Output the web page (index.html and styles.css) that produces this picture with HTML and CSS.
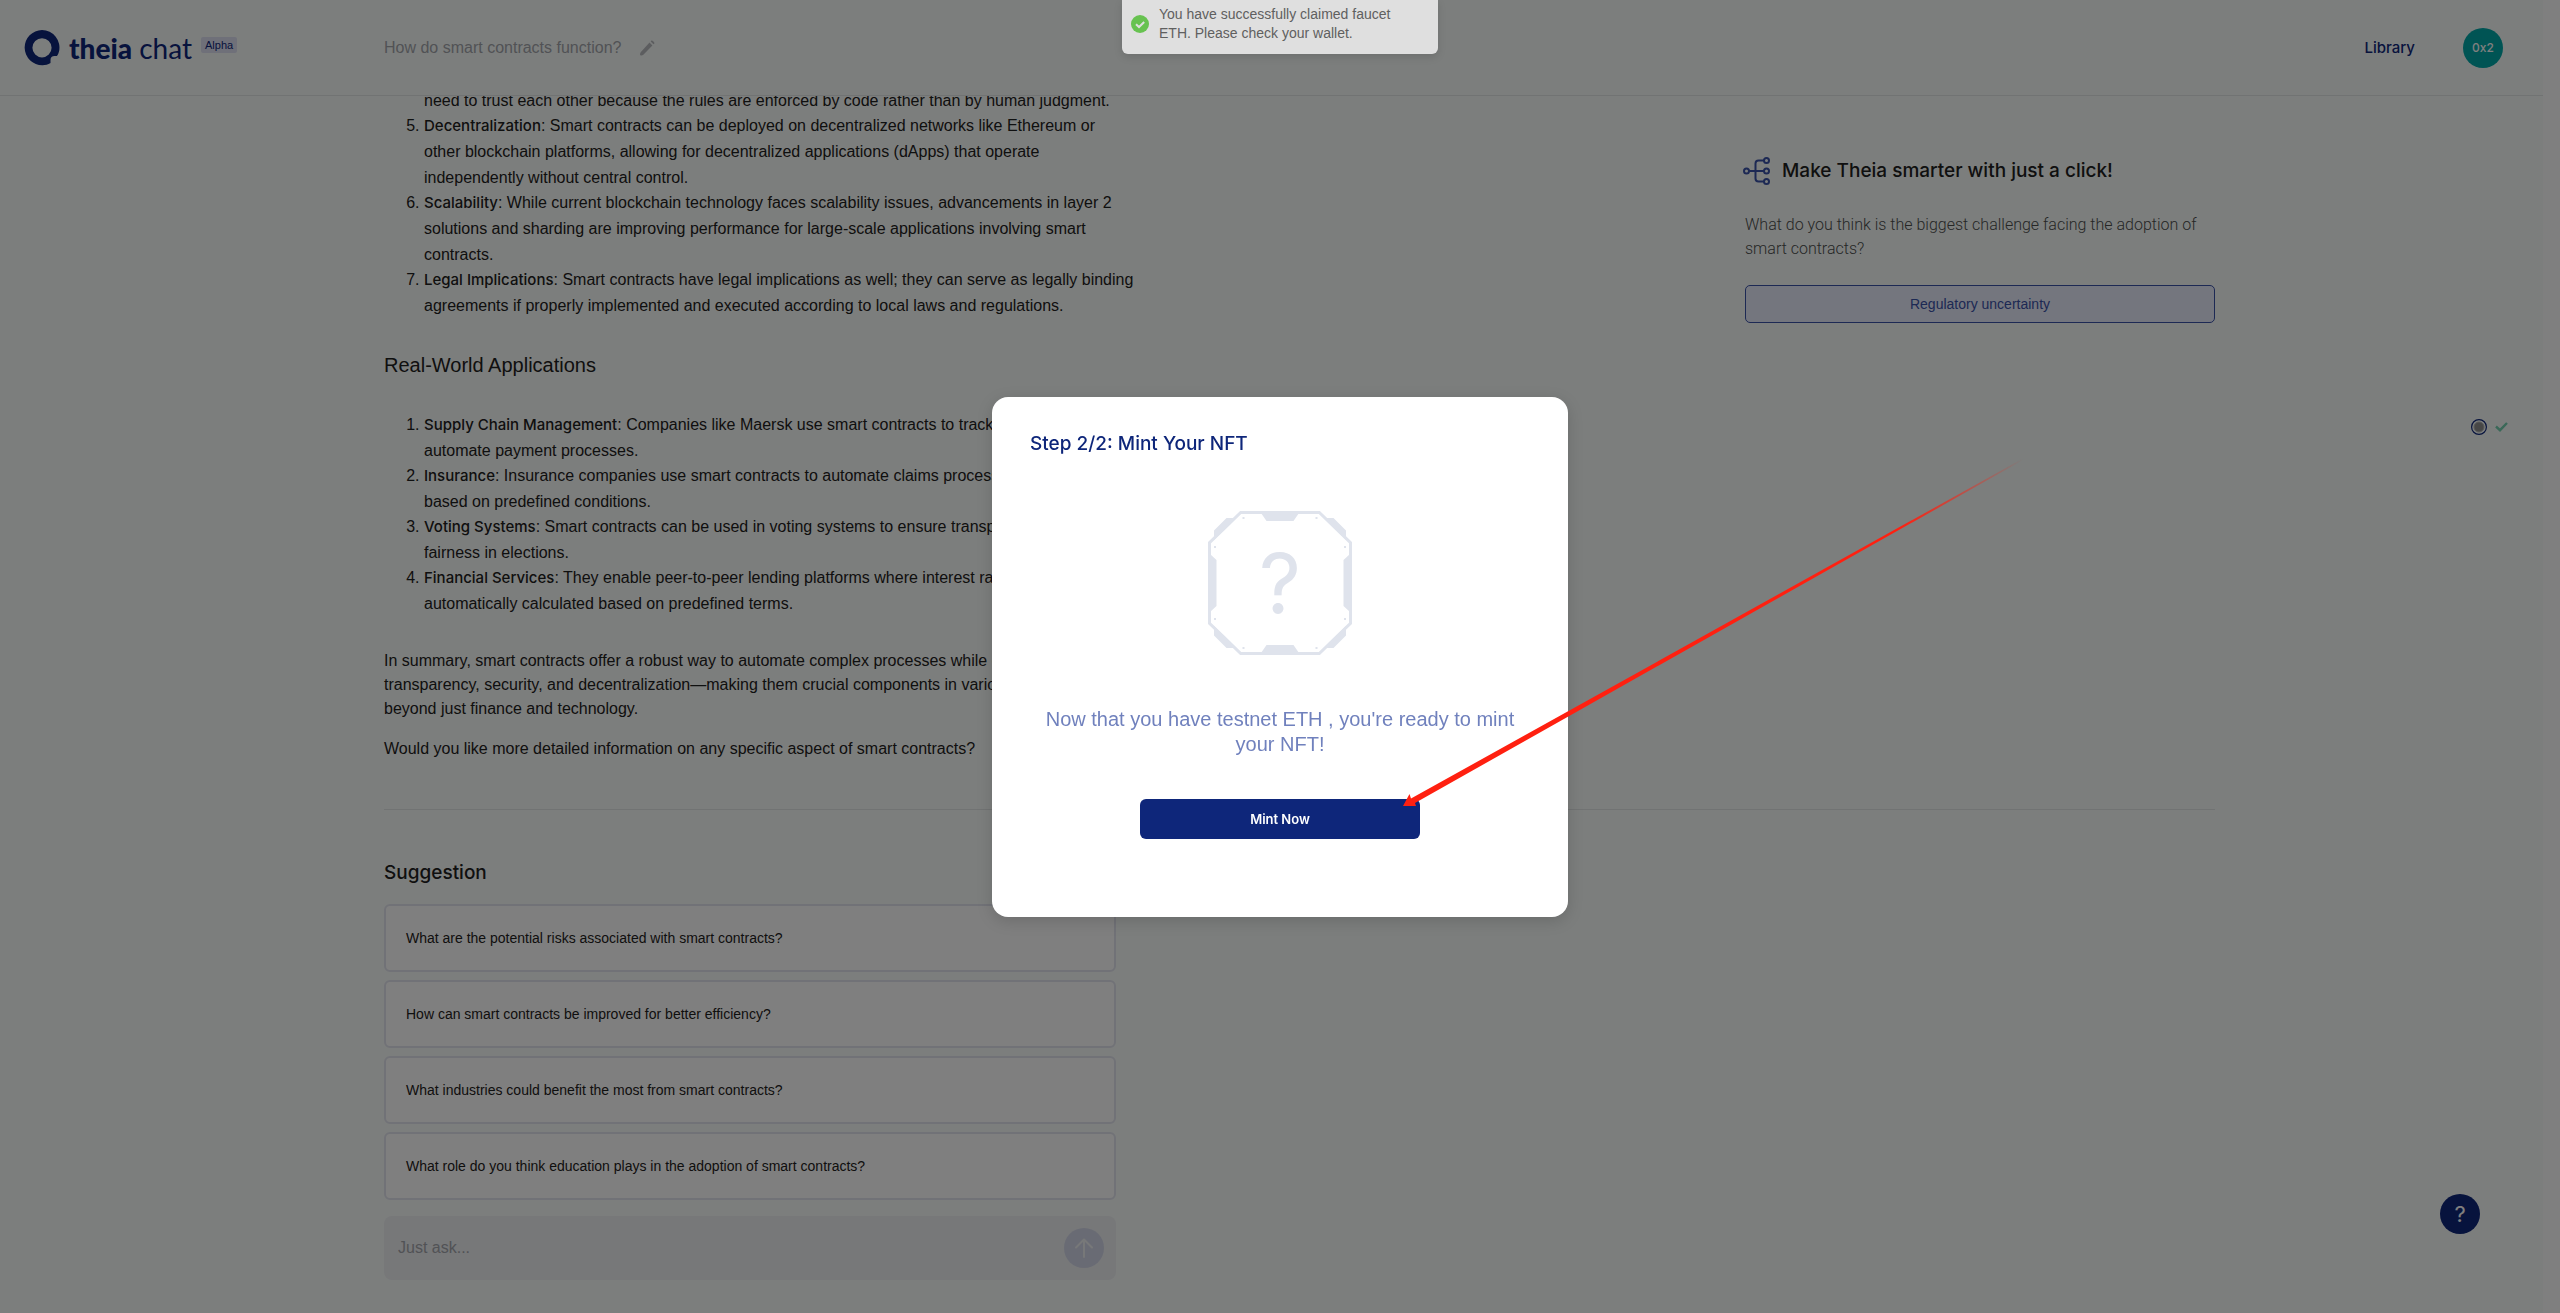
FILE: index.html
```html
<!DOCTYPE html>
<html lang="en">

<head>
    <meta charset="UTF-8">
    <meta name="viewport" content="width=device-width, initial-scale=1.0">
    <title>Theia Chat</title>
    <link rel="stylesheet" href="styles.css">
</head>

<body>
    <div class="app">
        <header class="header">
            <a class="logo" href="#">
                <svg width="36" height="36" viewBox="0 0 36 36">
                    <path fill="currentColor" fill-rule="evenodd" d="M18 0a17.500 17.500 0 0 1 17 21.500c-.4 1.800-1.100 3.300-2 4.500h-2.500c-2.500 0-4 1.500-4 4V33c-2.500 1.500-5 2.200-8 2.200A17.600 17.600 0 0 1 18 0zM18 8.200a9.600 9.600 0 1 0 0 19.200a9.600 9.600 0 0 0 0-19.200z"/>
                </svg>
                <span class="logo-text"><b>theia</b> chat</span>
                <span class="badge">Alpha</span>
            </a>
            <div class="chat-title">
                <span>How do smart contracts function?</span>
                <button class="icon-button" aria-label="Rename chat">
                    <svg width="16" height="16" viewBox="0 0 16 16" fill="currentColor">
                        <path d="M10.500 2.600l2.900 2.900-8.800 8.900c-.8.800-2.600 1.200-3.400.9-.4-.9 0-2.600.7-3.300z"/>
                        <path d="M11.700 1.400l.7-.8c.8-.8 3.700 2.100 2.900 2.900l-.8.800z"/>
                    </svg>
                </button>
            </div>
            <nav class="nav">
                <a href="#">Library</a>
                <button class="avatar">0x2</button>
            </nav>
        </header>

        <main class="content">
            <div class="conversation">
                <article class="answer">
                    <ol>
                        <li class="continued">need to trust each other because the rules are enforced by code rather than by human judgment.</li>
                        <li value="5"><strong>Decentralization</strong>: Smart contracts can be deployed on decentralized networks like Ethereum or<br>other blockchain platforms, allowing for decentralized applications (dApps) that operate<br>independently without central control.</li>
                        <li><strong>Scalability</strong>: While current blockchain technology faces scalability issues, advancements in layer 2<br>solutions and sharding are improving performance for large-scale applications involving smart<br>contracts.</li>
                        <li><strong>Legal Implications</strong>: Smart contracts have legal implications as well; they can serve as legally binding<br>agreements if properly implemented and executed according to local laws and regulations.</li>
                    </ol>
                    <h3>Real-World Applications</h3>
                    <ol>
                        <li><strong>Supply Chain Management</strong>: Companies like Maersk use smart contracts to track<br>automate payment processes.</li>
                        <li><strong>Insurance</strong>: Insurance companies use smart contracts to automate claims processing<br>based on predefined conditions.</li>
                        <li><strong>Voting Systems</strong>: Smart contracts can be used in voting systems to ensure transparency<br>fairness in elections.</li>
                        <li><strong>Financial Services</strong>: They enable peer-to-peer lending platforms where interest rates<br>automatically calculated based on predefined terms.</li>
                    </ol>
                    <p>In summary, smart contracts offer a robust way to automate complex processes while ensuring<br>transparency, security, and decentralization—making them crucial components in various<br>beyond just finance and technology.</p>
                    <p>Would you like more detailed information on any specific aspect of smart contracts?</p>
                </article>

                <aside class="quiz">
                    <h2>
                        <svg width="27" height="28" viewBox="0 0 27 28" fill="none" stroke="currentColor" stroke-width="2">
                            <circle cx="3.500" cy="14" r="2.500"/>
                            <circle cx="23.500" cy="3.500" r="2.500"/>
                            <circle cx="23.500" cy="14" r="2.500"/>
                            <circle cx="23.500" cy="24.500" r="2.500"/>
                            <path d="M6 14h15M21 3.500h-5.500a3 3 0 0 0-3 3v15a3 3 0 0 0 3 3H21"/>
                        </svg>
                        Make Theia smarter with just a click!
                    </h2>
                    <p>What do you think is the biggest challenge facing the adoption of smart contracts?</p>
                    <button class="answer-button">Regulatory uncertainty</button>
                </aside>

                <div class="status">
                    <svg width="16" height="16" viewBox="0 0 16 16">
                        <circle cx="8" cy="8" r="7.400" fill="none" stroke="#0e267a" stroke-width="1.200"/>
                        <circle cx="8" cy="8" r="5" fill="#8f8f8f" stroke="#b0b0b0" stroke-width="1"/>
                    </svg>
                    <svg width="13" height="10" viewBox="0 0 13 10" fill="none" stroke="#74d0b0" stroke-width="2.400">
                        <path d="M1 4.500L5 8.200L12 1"/>
                    </svg>
                </div>
            </div>

            <section class="suggestions">
                <h2>Suggestion</h2>
                <button>What are the potential risks associated with smart contracts?</button>
                <button>How can smart contracts be improved for better efficiency?</button>
                <button>What industries could benefit the most from smart contracts?</button>
                <button>What role do you think education plays in the adoption of smart contracts?</button>
            </section>

            <form class="ask">
                <input type="text" placeholder="Just ask..." aria-label="Just ask">
                <button type="button" aria-label="Send">
                    <svg width="20" height="20" viewBox="0 0 20 20" fill="none" stroke="currentColor" stroke-width="2" stroke-linecap="round" stroke-linejoin="round">
                        <path d="M10 19V1.500M2 9.500l8-8 8 8"/>
                    </svg>
                </button>
            </form>
        </main>

        <button class="help" aria-label="Help">?</button>
    </div>

    <div class="overlay">
        <div class="modal" role="dialog" aria-labelledby="modal-title">
            <h2 id="modal-title">Step 2/2: Mint Your NFT</h2>
            <svg class="nft" width="144" height="144" viewBox="0 0 144 144" fill="currentColor">
                <path d="M32.700 1.500h78.600L142.500 31.700v80.600L111.300 142.500H32.700L1.500 112.300V31.700z" fill="none" stroke="currentColor" stroke-width="3"/>
                <!-- side plates -->
                <path d="M53 2h38l-5.500 8h-27zM53 142h38l-5.500-8h-27zM2 43l6.500 6v46L2 101zM142 43l-6.500 6v46l6.500 6z"/>
                <!-- corner plates -->
                <path d="M6 29v-9.500L18.500 7H28zM138 29v-9.500L125.500 7H116zM6 115v9.500L18.500 137H28zM138 115v9.500L125.500 137H116z"/>
                <!-- rivets -->
                <path d="M34.500 6h2v2h-2zM107.500 6h2v2h-2zM34.500 136h2v2h-2zM107.500 136h2v2h-2zM6 35h2v2H6zM136 35h2v2h-2zM6 107h2v2H6zM136 107h2v2h-2z"/>
                <text x="72" y="102" text-anchor="middle">?</text>
            </svg>
            <p>Now that you have testnet ETH , you're ready to mint your NFT!</p>
            <button class="mint">Mint Now</button>
            <svg class="pointer" width="620" height="350" viewBox="0 0 620 350">
                <defs>
                    <linearGradient id="fade" x1="0" y1="0" x2="1" y2="0">
                        <stop offset="0.800" stop-color="#ff2010"/>
                        <stop offset="1" stop-color="#ff2010" stop-opacity="0"/>
                    </linearGradient>
                </defs>
                <path fill="url(#fade)" d="M0 347L6.500 335L8 339.500L619 0L620 1L12 344L13 347z"/>
            </svg>
        </div>
    </div>

    <div class="toast" role="status">
        <svg width="18" height="18" viewBox="0 0 18 18">
            <circle cx="9" cy="9" r="9" fill="#67c250"/>
            <path d="M5 9.200l3 2.800 5.200-5" fill="none" stroke="#dfdfdf" stroke-width="2"/>
        </svg>
        <span>You have successfully claimed faucet ETH. Please check your wallet.</span>
    </div>
</body>

</html>
```
FILE: styles.css
```css
* {
    margin: 0;
    padding: 0;
    box-sizing: border-box;
}

body {
    font-family: "Liberation Sans", Arial, sans-serif;
    font-size: 16px;
    line-height: 24px;
    color: #1e2120;
    background: #fff;
}

button {
    font: inherit;
    border: none;
    cursor: pointer;
}

a {
    color: inherit;
    text-decoration: none;
}

.app {
    min-height: 100vh;
    margin-right: 17px;
    background: #f9fdfb;
}

/* Header */
.header {
    position: fixed;
    top: 0;
    left: 0;
    right: 17px;
    z-index: 1;
    height: 96px;
    display: flex;
    align-items: center;
    padding: 0 40px 0 24px;
    background: #f9fdfb;
    border-bottom: 1px solid #e2e6e6;
}

.logo {
    flex: 0 0 calc(15vw - 24px);
    display: flex;
    align-items: center;
    color: #0e267a;
}

.logo-text {
    margin-left: 9px;
    font-family: Lato, sans-serif;
    font-size: 28px;
    font-weight: 400;
}

.logo-text b {
    font-weight: 900;
}

.badge {
    align-self: flex-start;
    margin: 7px 0 0 9px;
    padding: 0 4px;
    border-radius: 2px;
    background: #dfe1f2;
    font-size: 11px;
    line-height: 16px;
}

.chat-title {
    flex: 1;
    display: flex;
    align-items: center;
    gap: 18px;
    color: #a3a5ab;
}

.icon-button {
    display: flex;
    background: none;
    color: #b9bbbf;
}

.nav {
    display: flex;
    align-items: center;
    gap: 48px;
    color: #0e267a;
    font-family: Inter, sans-serif;
    font-size: 15px;
    font-weight: 500;
}

.avatar {
    width: 40px;
    height: 40px;
    border-radius: 50%;
    background: #00a8a8;
    color: #fff;
    font-size: 12px;
}

/* Conversation */
.content {
    padding: 88px 328px 28px 15vw;
}

.conversation {
    position: relative;
    display: flex;
    justify-content: space-between;
    align-items: flex-start;
    padding-bottom: 48px;
    border-bottom: 1px solid #e2e6e6;
}

.answer {
    width: 40%;
    white-space: nowrap;
}

.answer ol {
    padding-left: 40px;
    line-height: 26px;
}

.answer li {
    margin-bottom: -1px;
}

.answer .continued {
    list-style: none;
}

.answer strong {
    font-family: Inter, sans-serif;
    font-size: 15px;
    font-weight: 500;
}

.answer h3 {
    margin: 35px 0;
    font-size: 20px;
    font-weight: 400;
}

.answer p {
    margin-top: 16px;
}

.answer ol + p {
    margin-top: 33px;
}

.quiz {
    width: 470px;
    padding-top: 69px;
    color: #6a6c6b;
}

.quiz h2 {
    display: flex;
    align-items: center;
    gap: 12px;
    margin-left: -2px;
    color: #1e2120;
}

.quiz h2 svg {
    color: #3a52a8;
}

.quiz p {
    margin-top: 28px;
    font-family: Roboto, sans-serif;
    font-weight: 300;
    color: #4c4e4d;
}

.answer-button {
    width: 100%;
    height: 38px;
    margin-top: 24px;
    border: 1px solid #3a52a8;
    border-radius: 5px;
    background: #e9ecfc;
    color: #3a52a8;
    font-size: 14px;
}

h2 {
    font-family: Inter, sans-serif;
    font-size: 19px;
    font-weight: 500;
}

.status {
    position: absolute;
    right: -293px;
    top: 331px;
    display: flex;
    align-items: center;
    gap: 8px;
}

/* Suggestions and input */
.suggestions {
    width: 40%;
    margin: 51px 0 16px;
    display: flex;
    flex-direction: column;
    gap: 8px;
}

.suggestions h2 {
    margin-bottom: 11px;
}

.suggestions button {
    height: 68px;
    padding: 0 20px;
    border: 2px solid #e3e4ee;
    border-radius: 6px;
    background: #fff;
    color: #1e2120;
    font-size: 14px;
    text-align: left;
}

.ask {
    width: 40%;
    height: 64px;
    display: flex;
    align-items: center;
    padding: 0 12px 0 14px;
    border-radius: 8px;
    background: #eef0f3;
}

.ask input {
    flex: 1;
    border: none;
    background: none;
    font: inherit;
}

.ask input::placeholder {
    color: #a3a5ab;
}

.ask button {
    width: 40px;
    height: 40px;
    display: flex;
    align-items: center;
    justify-content: center;
    border-radius: 50%;
    background: #d3d7e8;
    color: #eef0f3;
}

.help {
    position: fixed;
    right: 80px;
    bottom: 79px;
    width: 40px;
    height: 40px;
    border-radius: 50%;
    background: #0e267a;
    color: #fff;
    font-family: Inter, sans-serif;
    font-size: 22px;
}

/* Modal */
.overlay {
    position: fixed;
    inset: 0;
    z-index: 2;
    display: flex;
    align-items: center;
    justify-content: center;
    background: rgba(0, 0, 0, 0.5);
}

.modal {
    position: relative;
    width: 576px;
    height: 520px;
    display: flex;
    flex-direction: column;
    align-items: center;
    padding: 35px 38px;
    border-radius: 16px;
    background: #fff;
    box-shadow: 0 4px 16px rgba(0, 0, 0, 0.15);
}

.modal h2 {
    align-self: flex-start;
    color: #0e267a;
}

.nft {
    margin: 55px 0 52px;
    color: #dfe3ec;
    font-family: Inter, sans-serif;
    font-size: 82px;
    font-weight: 400;
}

.modal p {
    color: #7081bd;
    font-size: 20px;
    line-height: 25px;
    text-align: center;
}

.mint {
    width: 280px;
    height: 40px;
    margin-top: 42px;
    border-radius: 6px;
    background: #0e267a;
    color: #fff;
    font-family: Inter, sans-serif;
    font-size: 13px;
    font-weight: 600;
}

.pointer {
    position: absolute;
    left: 411px;
    top: 62px;
    pointer-events: none;
}

.toast {
    position: fixed;
    top: 0;
    left: 50%;
    z-index: 3;
    width: 316px;
    height: 54px;
    display: flex;
    align-items: center;
    gap: 10px;
    padding: 0 40px 6px 9px;
    transform: translateX(-50%);
    border-radius: 0 0 6px 6px;
    background: #dfdfdf;
    color: #606060;
    box-shadow: 0 3px 8px rgba(0, 0, 0, 0.12);
    font-size: 14px;
    line-height: 19px;
}

.toast svg {
    flex: none;
}
```
